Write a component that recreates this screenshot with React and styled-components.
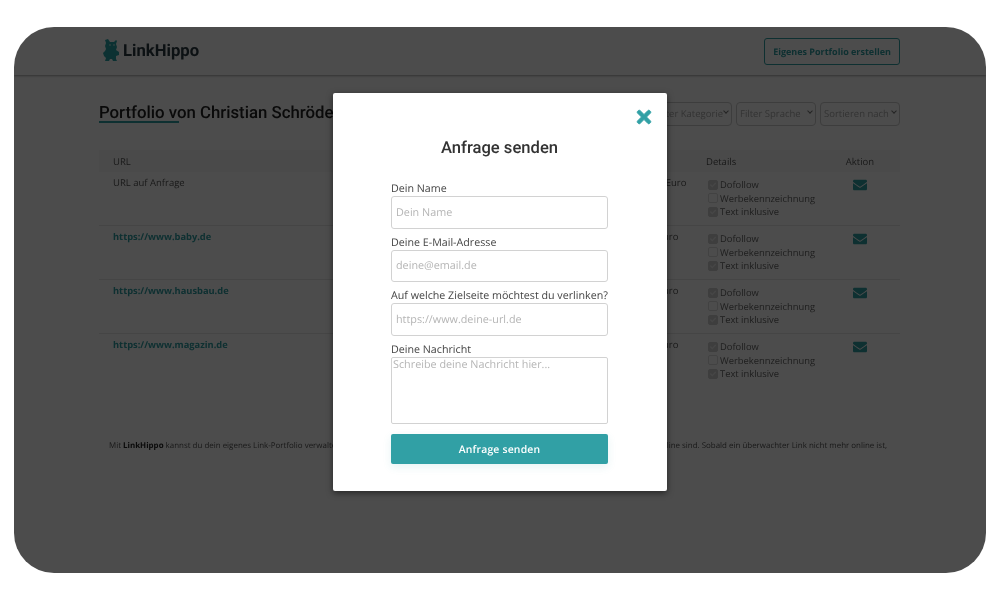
import React from 'react';
import styled, { createGlobalStyle } from 'styled-components';
import { FaEnvelope, FaTimes, FaCheck } from 'react-icons/fa';

const GlobalStyle = createGlobalStyle`
	html, body {
		margin: 0;
		background: #fff;
		text-rendering: geometricPrecision;
	}
	* {
		box-sizing: border-box;
	}
	input, textarea, select, button {
		text-rendering: geometricPrecision;
	}
`;

const Shell = styled.div`
	width: 1000px;
	height: 600px;
	padding: 27px 14px;
`;

const Screen = styled.div`
	position: relative;
	height: 546px;
	border-radius: 40px;
	overflow: hidden;
	background: #fff;
	font-family: 'Open Sans', sans-serif;
	color: #555;
	filter: blur(0.35px);
`;

const Header = styled.header`
	display: flex;
	align-items: center;
	justify-content: space-between;
	height: 48px;
	padding: 0 86px 0 88px;
	box-shadow: 0 1px 2px rgba(0, 0, 0, 0.35);
`;

const Logo = styled.div`
	display: flex;
	align-items: center;
	gap: 1px;
	font-family: Roboto, sans-serif;
	font-weight: 700;
	font-size: 16.7px;
	color: #2b3a42;
`;

const OutlineButton = styled.button`
	width: 136px;
	height: 27px;
	padding: 0;
	border: 1px solid #31a0a5;
	border-radius: 3px;
	background: #fff;
	color: #31a0a5;
	font-family: 'Open Sans', sans-serif;
	font-weight: 700;
	font-size: 9px;
`;

const Main = styled.main`
	padding: 25px 86px 0 85px;
`;

const TitleRow = styled.div`
	display: flex;
	align-items: center;
	justify-content: space-between;
	height: 24px;
`;

const Title = styled.h1`
	position: relative;
	margin: 0;
	padding-top: 2px;
	font-family: Roboto, sans-serif;
	font-weight: 500;
	font-size: 16.8px;
	color: #222;

	&::after {
		content: '';
		position: absolute;
		left: 0;
		bottom: 0;
		width: 80px;
		height: 2px;
		background: #31a0a5;
	}
`;

const Filters = styled.div`
	display: flex;
	gap: 4px;
`;

const SelectBox = styled.div`
	position: relative;
	width: 80px;
	height: 24px;

	&::after {
		content: '';
		position: absolute;
		top: 9px;
		right: 4px;
		width: 3px;
		height: 3px;
		border-right: 1px solid #777;
		border-bottom: 1px solid #777;
		transform: rotate(45deg);
	}
`;

const Select = styled.select`
	appearance: none;
	width: 100%;
	height: 100%;
	padding: 0 8px 0 3px;
	border: 1px solid #ccc;
	border-radius: 4px;
	background: #fff;
	color: #aaa;
	font-family: 'Open Sans', sans-serif;
	font-size: 9.5px;
`;

const Table = styled.div`
	margin-top: 26px;
`;

const HeadRow = styled.div`
	display: grid;
	grid-template-columns: 526px 67px 126px 56px;
	align-items: center;
	height: 22px;
	padding: 1px 0 0 14px;
	font-size: 9.5px;
	background: #f9f9f9;
`;

const Row = styled.div`
	display: grid;
	grid-template-columns: 526px 67px 126px 56px;
	align-items: start;
	height: 54px;
	padding: 4px 0 0 14px;
	font-size: 9.5px;
	border-bottom: 1px solid #e6e6e6;

	&:last-child {
		border-bottom: 0;
	}
`;

const Centered = styled.div`
	text-align: center;
`;

const UrlLink = styled.a`
	color: #31a0a5;
	font-weight: 700;
	font-size: 9.3px;
`;

const DetailList = styled.div`
	padding-top: 2px;
	padding-left: 2px;
`;

const DetailItem = styled.div`
	display: flex;
	align-items: center;
	gap: 2px;
	height: 13.6px;
	font-size: 9.4px;
	color: #666;
`;

const Check = styled.span`
	display: inline-flex;
	align-items: center;
	justify-content: center;
	width: 10px;
	height: 10px;
	border-radius: 2px;
	border: 1px solid ${(p) => (p.$on ? '#d0d0d0' : '#ddd')};
	background: ${(p) => (p.$on ? '#d0d0d0' : '#fff')};
	color: #eee;
	font-size: 6px;
`;

const MailIcon = styled(FaEnvelope)`
	display: inline-block;
	margin-top: 2px;
	width: 14px;
	height: 14px;
	color: #31a0a5;
`;

const Footnote = styled.p`
	margin: 53px 0 0 10px;
	font-size: 7.95px;
	white-space: nowrap;
	color: #555;

	b {
		color: #222;
	}
`;

const Overlay = styled.div`
	position: absolute;
	inset: 0;
	display: flex;
	justify-content: center;
	align-items: flex-start;
	padding-top: 66px;
	background: rgba(0, 0, 0, 0.7);
`;

const Modal = styled.div`
	position: relative;
	width: 334px;
	height: 398px;
	background: #fff;
	border-radius: 2px;
	box-shadow: 0 2px 6px rgba(0, 0, 0, 0.5);
	padding: 45px 59px 0 58px;
`;

const CloseIcon = styled(FaTimes)`
	position: absolute;
	top: 14px;
	right: 13px;
	width: 20px;
	height: 20px;
	color: #31a0a5;
	stroke: currentColor;
	stroke-width: 20;
`;

const ModalTitle = styled.h2`
	margin: 0 0 22px;
	font-family: Roboto, sans-serif;
	font-weight: 500;
	font-size: 16.6px;
	line-height: 22px;
	text-align: center;
	color: #333;
`;

const Field = styled.label`
	display: block;
	margin-bottom: 7px;
	font-size: 10.7px;
	line-height: 15px;
	white-space: nowrap;
	color: #444;
`;

const Input = styled.input`
	display: block;
	width: 100%;
	height: 32.5px;
	margin-top: -1px;
	padding: 0 4px;
	border: 1px solid #d2d2d2;
	border-radius: 3px;
	background: #fff;
	font-family: 'Open Sans', sans-serif;
	font-size: 10.8px;

	&::placeholder {
		color: #b5b5b5;
	}
`;

const TextArea = styled.textarea`
	display: block;
	width: 100%;
	height: 67px;
	margin-top: -1px;
	padding: 0 1px;
	border: 1px solid #d2d2d2;
	border-radius: 2px;
	background: #fff;
	font-family: 'Open Sans', sans-serif;
	font-size: 10.8px;
	line-height: 13px;
	resize: none;

	&::placeholder {
		color: #b5b5b5;
	}
`;

const SubmitButton = styled.button`
	display: block;
	width: 100%;
	height: 30px;
	margin-top: 10px;
	padding: 2px 0 0;
	border: 0;
	border-radius: 2px;
	background: #31a0a5;
	box-shadow: 0 3px 8px rgba(49, 160, 165, 0.12);
	color: #fff;
	font-family: 'Open Sans', sans-serif;
	font-weight: 600;
	font-size: 10.4px;
	letter-spacing: 0.2px;
`;

// little hippo, only a rough shape in the dimmed header
function HippoLogo() {
	return (
		<svg width="20" height="26" viewBox="0 0 20 26" fill="#2aa5a8">
			<path d="M6 1l2 3h4l2-2 1 1-1 3 1 3-1 3 3 2v3l-3 1v3l1 2h-4l-1-2H8l-1 2H3l1-3-2-2-1-3 2-2 1-2-1-3 1-3-1-3z" />
			<circle cx="8" cy="7" r="0.7" fill="#fff" />
			<circle cx="12" cy="7" r="0.7" fill="#fff" />
		</svg>
	);
}

const listings = [
	{ url: 'URL auf Anfrage', price: '1.000 Euro', plain: true },
	{ url: 'https://www.baby.de', price: '800 Euro' },
	{ url: 'https://www.hausbau.de', price: '800 Euro' },
	{ url: 'https://www.magazin.de', price: '800 Euro' },
];

function Detail({ on, children }) {
	return (
		<DetailItem>
			<Check $on={on}>{on && <FaCheck />}</Check>
			{children}
		</DetailItem>
	);
}

export default function App() {
	return (
		<Shell>
			<GlobalStyle />
			<Screen>
				<Header>
					<Logo>
						<HippoLogo />
						LinkHippo
					</Logo>
					<OutlineButton>Eigenes Portfolio erstellen</OutlineButton>
				</Header>
				<Main>
					<TitleRow>
						<Title>Portfolio von Christian Schröder</Title>
						<Filters>
							<SelectBox>
								<Select>
									<option>Filter Kategorie</option>
								</Select>
							</SelectBox>
							<SelectBox>
								<Select>
									<option>Filter Sprache</option>
								</Select>
							</SelectBox>
							<SelectBox>
								<Select>
									<option>Sortieren nach</option>
								</Select>
							</SelectBox>
						</Filters>
					</TitleRow>
					<Table>
						<HeadRow>
							<div>URL</div>
							<div>Preis</div>
							<div>Details</div>
							<Centered>Aktion</Centered>
						</HeadRow>
						{listings.map((item) => (
							<Row key={item.url}>
								{item.plain ? <div>{item.url}</div> : <div><UrlLink>{item.url}</UrlLink></div>}
								<div>{item.price}</div>
								<DetailList>
									<Detail on>Dofollow</Detail>
									<Detail>Werbekennzeichnung</Detail>
									<Detail on>Text inklusive</Detail>
								</DetailList>
								<Centered>
									<MailIcon />
								</Centered>
							</Row>
						))}
					</Table>
					<Footnote>
						Mit <b>LinkHippo</b> kannst du dein eigenes Link-Portfolio verwalten sowie automatisch überwachen lassen, ob alle deine gesetzten Links noch dauerhaft online sind. Sobald ein überwachter Link nicht mehr online ist,
					</Footnote>
				</Main>
				<Overlay>
					<Modal>
						<CloseIcon />
						<ModalTitle>Anfrage senden</ModalTitle>
						<Field>
							Dein Name
							<Input placeholder="Dein Name" />
						</Field>
						<Field>
							Deine E-Mail-Adresse
							<Input placeholder="deine@email.de" />
						</Field>
						<Field>
							Auf welche Zielseite möchtest du verlinken?
							<Input placeholder="https://www.deine-url.de" />
						</Field>
						<Field>
							Deine Nachricht
							<TextArea placeholder="Schreibe deine Nachricht hier..." />
						</Field>
						<SubmitButton>Anfrage senden</SubmitButton>
					</Modal>
				</Overlay>
			</Screen>
		</Shell>
	);
}
